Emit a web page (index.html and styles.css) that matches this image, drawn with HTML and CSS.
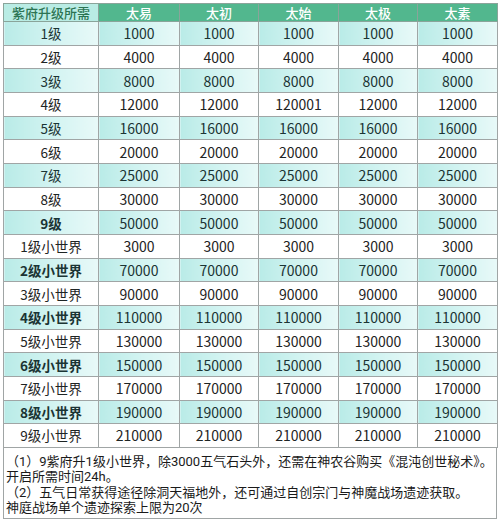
FILE: index.html
```html
<!DOCTYPE html>
<html lang="zh">
<head>
<meta charset="utf-8">
<link rel="stylesheet" href="styles.css">
</head>
<body>
<div class="sheet">
<table class="grid">
<colgroup>
<col class="c0"><col class="c1"><col class="c2"><col class="c3"><col class="c4"><col class="c5">
</colgroup>
<thead>
<tr><th class="corner">紫府升级所需</th><th>太易</th><th>太初</th><th>太始</th><th>太极</th><th>太素</th></tr>
</thead>
<tbody>
<tr class="hl"><td>1级</td><td>1000</td><td>1000</td><td>1000</td><td>1000</td><td>1000</td></tr>
<tr><td>2级</td><td>4000</td><td>4000</td><td>4000</td><td>4000</td><td>4000</td></tr>
<tr class="hl"><td>3级</td><td>8000</td><td>8000</td><td>8000</td><td>8000</td><td>8000</td></tr>
<tr><td>4级</td><td>12000</td><td>12000</td><td>120001</td><td>12000</td><td>12000</td></tr>
<tr class="hl"><td>5级</td><td>16000</td><td>16000</td><td>16000</td><td>16000</td><td>16000</td></tr>
<tr><td>6级</td><td>20000</td><td>20000</td><td>20000</td><td>20000</td><td>20000</td></tr>
<tr class="hl"><td>7级</td><td>25000</td><td>25000</td><td>25000</td><td>25000</td><td>25000</td></tr>
<tr><td>8级</td><td>30000</td><td>30000</td><td>30000</td><td>30000</td><td>30000</td></tr>
<tr class="hl"><td class="b">9级</td><td>50000</td><td>50000</td><td>50000</td><td>50000</td><td>50000</td></tr>
<tr><td>1级小世界</td><td>3000</td><td>3000</td><td>3000</td><td>3000</td><td>3000</td></tr>
<tr class="hl"><td class="b">2级小世界</td><td>70000</td><td>70000</td><td>70000</td><td>70000</td><td>70000</td></tr>
<tr><td>3级小世界</td><td>90000</td><td>90000</td><td>90000</td><td>90000</td><td>90000</td></tr>
<tr class="hl"><td class="b">4级小世界</td><td>110000</td><td>110000</td><td>110000</td><td>110000</td><td>110000</td></tr>
<tr><td>5级小世界</td><td>130000</td><td>130000</td><td>130000</td><td>130000</td><td>130000</td></tr>
<tr class="hl"><td class="b">6级小世界</td><td>150000</td><td>150000</td><td>150000</td><td>150000</td><td>150000</td></tr>
<tr><td>7级小世界</td><td>170000</td><td>170000</td><td>170000</td><td>170000</td><td>170000</td></tr>
<tr class="hl"><td class="b">8级小世界</td><td>190000</td><td>190000</td><td>190000</td><td>190000</td><td>190000</td></tr>
<tr><td>9级小世界</td><td>210000</td><td>210000</td><td>210000</td><td>210000</td><td>210000</td></tr>
</tbody>
</table>
<div class="notes">
<div class="line">（1）9紫府升1级小世界，除3000五气石头外，还需在神农谷购买《混沌创世秘术》。</div>
<div class="line">开启所需时间24h。</div>
<div class="line">（2）五气日常获得途径除洞天福地外，还可通过自创宗门与神魔战场遗迹获取。</div>
<div class="line">神庭战场单个遗迹探索上限为20次</div>
</div>
</div>
</body>
</html>
```

FILE: styles.css
```css
html, body {
  margin: 0;
  padding: 0;
  background: #ffffff;
}
body {
  font-family: "Noto Sans CJK SC", "Noto Sans", sans-serif;
  color: #1e2424;
}
.sheet {
  padding: 3px 3px 0 3px;
  width: 494px;
}
.grid {
  width: 494px;
  border-collapse: collapse;
  table-layout: fixed;
}
.c0 { width: 95px; }
.c1 { width: 81px; }
.c2 { width: 79px; }
.c3 { width: 80px; }
.c4 { width: 79px; }
.c5 { width: 80px; }
.grid th {
  height: 17px;
  padding: 0;
  font-size: 13px;
  font-weight: 500;
  line-height: 17px;
  color: #ffffff;
  background: #52b78e;
  border: 1px solid #8aa49a;
  text-align: center;
}
.grid th.corner {
  background: #b9ece4;
  color: #2c7453;
}
.grid td {
  height: 22.67px;
  padding: 0;
  font-size: 14px;
  line-height: 22px;
  text-align: center;
  border: 1px solid #a0a5a5;
  background: #ffffff;
  white-space: nowrap;
}
.grid td:first-child {
  font-size: 13.5px;
}
.grid tr.hl td {
  background: linear-gradient(90deg, #b9ebe7 0%, #d4f4f2 55%, #e8f9f8 100%);
  color: #1b3434;
}
.grid td.b {
  font-weight: 700;
  color: #1d2e2e;
}
.notes {
  border: 1px solid #a0a5a5;
  border-top: none;
  padding: 6px 2px 2px 2px;
  height: 62px;
}
.line {
  font-family: Roboto, "Noto Sans CJK SC", sans-serif;
  font-size: 13px;
  line-height: 15.5px;
  white-space: nowrap;
  color: #1a1a1a;
}
```
